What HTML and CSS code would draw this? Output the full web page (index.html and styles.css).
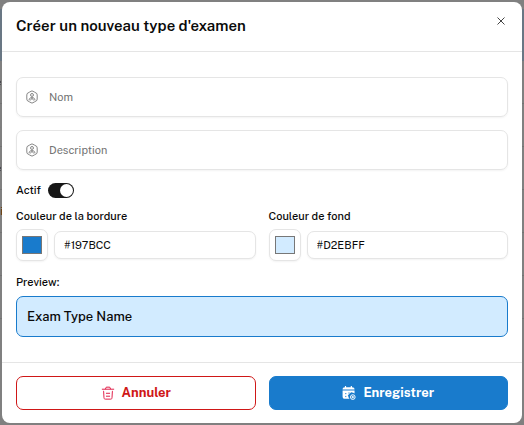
FILE: index.html
```html
<!DOCTYPE html>
<html lang="fr">
<head>
<meta charset="utf-8">
<meta name="viewport" content="width=device-width, initial-scale=1">
<title>Créer un nouveau type d'examen</title>
<link rel="stylesheet" href="styles.css">
</head>
<body>
<div class="backdrop" aria-hidden="true">
  <div class="backdrop-head"></div>
  <div class="backdrop-row">e</div>
  <div class="backdrop-row">s</div>
  <div class="backdrop-row">e</div>
  <div class="backdrop-row warm">i</div>
  <div class="backdrop-row"></div>
  <div class="backdrop-row"></div>
</div>
<form class="dialog" role="dialog" aria-labelledby="title">
  <header class="dialog-header">
    <h1 id="title">Créer un nouveau type d'examen</h1>
    <button class="close" type="button" aria-label="Fermer">
      <svg viewBox="0 0 10 10"><path d="M1.500 1.500l7 7M8.500 1.500l-7 7"/></svg>
    </button>
  </header>
  <div class="dialog-body">
    <label class="field">
      <svg class="field-icon" viewBox="0 0 24 24"><path d="M12 1.600c1 0 7.800 3.900 8.500 4.700.6.800.6 10.600 0 11.400-.7.800-7.500 4.700-8.500 4.700s-7.800-3.900-8.500-4.700c-.6-.8-.6-10.600 0-11.400C4.200 5.500 11 1.600 12 1.600z"/><circle cx="12" cy="8.500" r="2.500"/><path d="M7 17.500c0-3 2-4.500 5-4.500s5 1.500 5 4.500M9 18l3-4 3 4"/></svg>
      <input type="text" placeholder="Nom" aria-label="Nom">
    </label>
    <label class="field">
      <svg class="field-icon" viewBox="0 0 24 24"><path d="M12 1.600c1 0 7.800 3.900 8.500 4.700.6.800.6 10.600 0 11.400-.7.800-7.500 4.700-8.500 4.700s-7.800-3.900-8.500-4.700c-.6-.8-.6-10.600 0-11.400C4.200 5.500 11 1.600 12 1.600z"/><circle cx="12" cy="8.500" r="2.500"/><path d="M7 17.500c0-3 2-4.500 5-4.500s5 1.500 5 4.500M9 18l3-4 3 4"/></svg>
      <input type="text" placeholder="Description" aria-label="Description">
    </label>
    <div class="toggle">
      <label for="active">Actif</label>
      <input class="switch" id="active" type="checkbox" role="switch" checked>
    </div>
    <div class="colors">
      <div class="color">
        <label for="border-hex">Couleur de la bordure</label>
        <div class="color-inputs">
          <input class="swatch" type="color" value="#197bcc" aria-label="Choisir la couleur de la bordure">
          <input class="hex" id="border-hex" type="text" value="#197BCC">
        </div>
      </div>
      <div class="color">
        <label for="fill-hex">Couleur de fond</label>
        <div class="color-inputs">
          <input class="swatch" type="color" value="#d2ebff" aria-label="Choisir la couleur de fond">
          <input class="hex" id="fill-hex" type="text" value="#D2EBFF">
        </div>
      </div>
    </div>
    <div class="preview-label">Preview:</div>
    <div class="preview">Exam Type Name</div>
  </div>
  <footer class="dialog-footer">
    <button class="button cancel" type="button">
      <svg viewBox="0 0 24 24"><path d="M1.500 5.500h21M7.500 5.500L9 2h6l1.500 3.500M3.500 9h1l.6 11c.1 1.700.8 2.500 2.300 2.500h9.200c1.500 0 2.200-.8 2.300-2.500l.6-11h1M8.500 12.500h7M8.500 17.500h7"/></svg>
      Annuler
    </button>
    <button class="button save" type="button">
      <svg viewBox="0 0 24 24"><path class="solid" d="M5 0h2v2h8V0h2v2c3 0 4.500 1.500 4.500 4H1c0-2.500 1.300-4 4-4zM1 7.500h20.500V13A6 6 0 0 0 13 22H5c-2.700 0-4-1.300-4-4z"/><path class="marks" d="M6.500 12v2M11 12h2M16 11v2M6.500 17v2M11 15v2"/><circle class="badge" cx="18.500" cy="19" r="4"/><path class="plus" d="M18.500 17v4M16.500 19h4"/></svg>
      Enregistrer
    </button>
  </footer>
</form>
</body>
</html>
```
FILE: styles.css
```css
* {
  box-sizing: border-box;
}

body {
  margin: 0;
  min-height: 100vh;
  padding: 2px;
  background: #808080;
  color: #0a0a0a;
  font-family: "Public Sans", Inter, "Liberation Sans", sans-serif;
  font-size: 11px;
  line-height: 16px;
}

input,
button {
  font: inherit;
  color: inherit;
}

.backdrop {
  position: fixed;
  inset: 0;
  padding-top: 9px;
  overflow: hidden;
}

.backdrop-head {
  height: 52px;
  background: #697784;
}

.backdrop-row {
  height: 43px;
  border-bottom: 1px solid #737373;
  text-indent: -5px;
  line-height: 43px;
  color: #0a0a1a;
}

.backdrop-row.warm {
  text-indent: 0;
  color: #6b3c05;
}

.dialog {
  position: relative;
  background: #fff;
  border-radius: 8px;
}

.dialog-header {
  display: flex;
  justify-content: space-between;
  align-items: flex-start;
  padding: 12px 14px 13px;
  border-bottom: 1px solid #e5e5e5;
}

h1 {
  margin: 0;
  font-size: 15px;
  font-weight: 600;
  line-height: 24px;
}

.close {
  display: flex;
  padding: 2px;
  border: 0;
  background: none;
}

.close svg {
  width: 10px;
  height: 10px;
  fill: none;
  stroke: #444;
  stroke-width: 1;
}

.dialog-body {
  padding: 25px 14px;
}

.field {
  display: flex;
  align-items: center;
  gap: 10px;
  height: 40px;
  margin-bottom: 13px;
  padding: 0 8px;
  border: 1px solid #e5e5e5;
  border-radius: 7px;
  box-shadow: 0 1px 2px #0000000d;
}

.field-icon {
  width: 14px;
  height: 14px;
  fill: none;
  stroke: #737373;
  stroke-width: 1.5;
}

.field input {
  flex: 1;
  min-width: 0;
  padding: 0;
  border: 0;
  outline: 0;
  background: none;
}

.field input::placeholder {
  color: #737373;
}

.toggle {
  display: flex;
  align-items: center;
  gap: 7px;
  margin-bottom: 10px;
  font-weight: 500;
  line-height: 15px;
}

.switch {
  appearance: none;
  display: flex;
  width: 26px;
  height: 15px;
  margin: 0;
  padding: 1px;
  border-radius: 8px;
  background: #171717;
}

.switch::before {
  content: "";
  width: 13px;
  height: 13px;
  border-radius: 50%;
  background: #fff;
}

.switch:checked {
  justify-content: flex-end;
}

.colors {
  display: grid;
  grid-template-columns: 1fr 1fr;
  gap: 13px;
  margin-bottom: 13px;
}

.color label {
  display: block;
  margin-bottom: 5px;
  font-weight: 500;
}

.color-inputs {
  display: flex;
  align-items: center;
  gap: 6px;
}

.swatch,
.hex {
  margin: 0;
  border: 1px solid #e5e5e5;
  border-radius: 7px;
  background: #fff;
  box-shadow: 0 1px 2px #0000000d;
}

.swatch {
  flex: none;
  width: 32px;
  height: 32px;
  padding: 6px 5px;
}

.swatch::-webkit-color-swatch-wrapper {
  padding: 0;
}

.swatch::-webkit-color-swatch {
  border: 1px solid #777;
}

.hex {
  flex: 1;
  min-width: 0;
  height: 28px;
  padding: 0 9px;
}

.preview-label {
  margin-bottom: 6px;
  font-weight: 500;
}

.preview {
  padding: 12px 10px 11px;
  border: 1px solid #197bcc;
  border-radius: 7px;
  background: #d2ebff;
  font-size: 13px;
  font-weight: 500;
}

.dialog-footer {
  display: grid;
  grid-template-columns: 1fr 1fr;
  gap: 13px;
  padding: 13px 14px;
  border-top: 1px solid #e5e5e5;
}

.button {
  display: flex;
  align-items: center;
  justify-content: center;
  gap: 7px;
  height: 34px;
  border: 1px solid;
  border-radius: 7px;
  font-size: 13px;
  font-weight: 700;
}

.button svg {
  width: 14px;
  height: 14px;
  fill: none;
  stroke: currentColor;
  stroke-width: 1.7;
}

.cancel {
  border-color: #cf1717;
  background: #fff;
  color: #cf1717;
}

.cancel svg {
  color: #e11d48;
}

.save {
  border-color: #197bcc;
  background: #197bcc;
  color: #fff;
}

.save .solid {
  fill: #fff;
  stroke: none;
}

.save .marks {
  stroke: #197bcc;
}
```
